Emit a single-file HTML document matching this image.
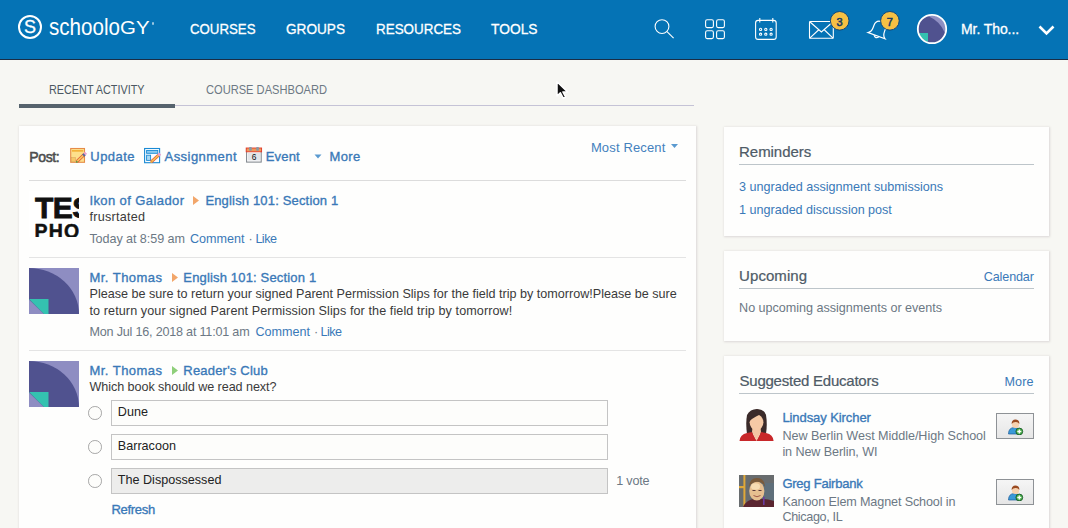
<!DOCTYPE html>
<html><head><meta charset="utf-8"><style>
html,body{margin:0;padding:0;width:1068px;height:528px;overflow:hidden;background:#f7f7f3;font-family:"Liberation Sans",sans-serif;}
.t{position:absolute;white-space:nowrap;}
.a{position:absolute;}
</style></head><body>
<div class="a" style="left:0;top:0;width:1068px;height:59px;background:#0573b5"></div>
<div class="a" style="left:0;top:58.5px;width:1068px;height:1.5px;background:#1a2d45"></div>
<svg class="a" style="left:0;top:0" width="60" height="58"><circle cx="30" cy="27" r="11" fill="none" stroke="#fff" stroke-width="2"/></svg>
<div class="t" style="left:23.90px;top:14.06px;font-size:18px;line-height:27px;color:#fff;-webkit-text-stroke:0.3px #fff;">S</div>
<div class="t" style="left:48.60px;top:7.61px;font-size:24.5px;line-height:37px;color:#fff;transform:scaleX(0.8408);transform-origin:0 0;">schoolo</div>
<div class="t" style="left:120.30px;top:14.86px;font-size:18px;line-height:27px;color:#fff;transform:scaleX(1.1343);transform-origin:0 0;">GY</div>
<div class="a" style="left:151.5px;top:22px;width:2.5px;height:2.5px;border-radius:50%;background:rgba(255,255,255,.6)"></div>
<div class="t" style="left:189.50px;top:18.85px;font-size:14px;line-height:21px;color:#fff;transform:scaleX(0.9460);transform-origin:0 0;-webkit-text-stroke:0.28px #fff;">COURSES</div>
<div class="t" style="left:286.00px;top:18.85px;font-size:14px;line-height:21px;color:#fff;transform:scaleX(0.9724);transform-origin:0 0;-webkit-text-stroke:0.28px #fff;">GROUPS</div>
<div class="t" style="left:375.50px;top:18.85px;font-size:14px;line-height:21px;color:#fff;transform:scaleX(0.9584);transform-origin:0 0;-webkit-text-stroke:0.28px #fff;">RESOURCES</div>
<div class="t" style="left:490.50px;top:18.85px;font-size:14px;line-height:21px;color:#fff;transform:scaleX(0.9852);transform-origin:0 0;-webkit-text-stroke:0.28px #fff;">TOOLS</div>
<svg class="a" style="left:640px;top:0" width="420" height="58"><g fill="none" stroke="#fff" stroke-width="1.1"><circle cx="22" cy="26.6" r="6.9"/><line x1="27" y1="31.6" x2="33.6" y2="38.2"/><rect x="65.6" y="19.8" width="7.8" height="7.8" rx="1.6"/><rect x="76.6" y="19.8" width="7.8" height="7.8" rx="1.6"/><rect x="65.6" y="30.8" width="7.8" height="7.8" rx="1.6"/><rect x="76.6" y="30.8" width="7.8" height="7.8" rx="1.6"/><rect x="115.6" y="20.4" width="20.6" height="19" rx="2.5"/><line x1="119.8" y1="18" x2="119.8" y2="22.5"/><line x1="132.8" y1="18" x2="132.8" y2="22.5"/><circle cx="120.6" cy="29.4" r="1.1"/><circle cx="125.8" cy="29.4" r="1.1"/><circle cx="131.1" cy="29.4" r="1.1"/><circle cx="120.6" cy="34.2" r="1.1"/><circle cx="125.8" cy="34.2" r="1.1"/><circle cx="131.1" cy="34.2" r="1.1"/><rect x="169.5" y="21.5" width="23.8" height="16.8" rx="1"/><path d="M169.5 21.5 L181.4 32 L193.3 21.5 M169.5 38.3 L178.5 30 M193.3 38.3 L184.5 30"/></g><g transform="translate(238.8 29.6) rotate(20)" fill="none" stroke="#fff" stroke-width="1.2"><path d="M-9 6.5 Q-6 4.5 -6 0 L-6 -2.5 Q-6 -8.5 0 -8.5 Q6 -8.5 6 -2.5 L6 0 Q6 4.5 9 6.5 Z"/><path d="M-2.5 7 Q0 10 2.5 7"/></g><circle cx="199.7" cy="20.8" r="9.3" fill="#f6c044" stroke="#12477a" stroke-width="1"/><circle cx="249.9" cy="20.8" r="9.3" fill="#f6c044" stroke="#12477a" stroke-width="1"/></svg>
<div class="t" style="left:836.60px;top:14.09px;font-size:11px;line-height:16px;color:#183a64;-webkit-text-stroke:0.55px #183a64;">3</div>
<div class="t" style="left:886.80px;top:14.09px;font-size:11px;line-height:16px;color:#183a64;-webkit-text-stroke:0.55px #183a64;">7</div>
<svg class="a" style="left:915px;top:12.3px" width="34" height="34"><defs><clipPath id="cp"><circle cx="17" cy="17" r="13.6"/></clipPath></defs><g clip-path="url(#cp)"><rect x="0" y="0" width="34" height="34" fill="#8f8fc2"/><path d="M2 2 A30 30 0 0 1 32 32 L2 32 Z" fill="#50528f"/><path d="M2 21 L13 21 L13 32 L9.5 32 Z" fill="#34c2b0"/><path d="M2 21.5 L2 32 L9.5 32 Z" fill="#8f8fc2"/></g><circle cx="17" cy="17" r="14.2" fill="none" stroke="#fff" stroke-width="1.8"/></svg>
<div class="t" style="left:961.00px;top:19.25px;font-size:14px;line-height:21px;color:#fff;-webkit-text-stroke:0.3px #fff;letter-spacing:-0.087px;">Mr. Tho...</div>
<svg class="a" style="left:1036px;top:22px" width="22" height="16"><path d="M3.5 4.5 L10.5 11.5 L17.5 4.5" fill="none" stroke="#fff" stroke-width="2.6"/></svg>
<div class="t" style="left:49.00px;top:80.00px;font-size:13px;line-height:20px;color:#4b5862;transform:scaleX(0.8332);transform-origin:0 0;">RECENT ACTIVITY</div>
<div class="t" style="left:205.50px;top:80.00px;font-size:13px;line-height:20px;color:#6d7984;transform:scaleX(0.8546);transform-origin:0 0;">COURSE DASHBOARD</div>
<div class="a" style="left:175px;top:105px;width:519px;height:1px;background:#c5c3d6"></div>
<div class="a" style="left:19px;top:104px;width:156px;height:4px;background:#56636d"></div>
<div class="a" style="left:19px;top:125.5px;width:677px;height:420px;background:#fefefd;box-shadow:0 0 2px 0.5px rgba(90,60,80,.16)"></div>
<div class="t" style="left:29.30px;top:146.65px;font-size:14px;line-height:21px;color:#4d4d4d;-webkit-text-stroke:0.55px #4d4d4d;letter-spacing:-0.380px;">Post:</div>
<svg class="a" style="left:66px;top:144px" width="24" height="22"><rect x="4.7" y="4.5" width="13.8" height="13.8" fill="#fde08c" stroke="#e68c48" stroke-width="1.1"/><rect x="6" y="6" width="11.2" height="1.7" fill="#f3b23a"/><rect x="5.3" y="13.6" width="4.2" height="4.2" fill="#f6c868" stroke="#d8a058" stroke-width="0.5"/><path d="M10.8 17.6 L18.4 10.4" stroke="#e04a38" stroke-width="3"/><path d="M10.8 17.6 L18.4 10.4" stroke="#f6c85a" stroke-width="1.8"/><path d="M17.2 11.6 L18.6 10.2" stroke="#5068a0" stroke-width="3"/><path d="M18.6 10.2 L20 8.8" stroke="#e8a0d0" stroke-width="3"/><circle cx="10.8" cy="17.8" r="0.9" fill="#4a9a40"/></svg>
<div class="t" style="left:90.30px;top:147.20px;font-size:13px;line-height:20px;color:#3a79b8;-webkit-text-stroke:0.35px #3a79b8;letter-spacing:0.447px;">Update</div>
<svg class="a" style="left:141px;top:144px" width="24" height="22"><rect x="3.6" y="4.5" width="15" height="14.2" fill="#fbfdff" stroke="#1a8ad4" stroke-width="1.1"/><rect x="5.6" y="6.5" width="11.2" height="2.8" fill="#8ccaf0" stroke="#1a8ad4" stroke-width="0.9"/><rect x="5.6" y="11.2" width="4" height="5.2" fill="#a8d8f4" stroke="#1a8ad4" stroke-width="0.9"/><path d="M10.2 17.8 L18.2 10.6" stroke="#e0503a" stroke-width="3"/><path d="M10.2 17.8 L18.2 10.6" stroke="#f8c050" stroke-width="1.8"/><path d="M17.4 11.3 L19.2 9.7" stroke="#e8a0d0" stroke-width="3"/><circle cx="10.2" cy="18" r="1" fill="#e8a040"/></svg>
<div class="t" style="left:164.50px;top:147.20px;font-size:13px;line-height:20px;color:#3a79b8;-webkit-text-stroke:0.35px #3a79b8;letter-spacing:0.458px;">Assignment</div>
<svg class="a" style="left:242px;top:143px" width="24" height="22"><rect x="4.6" y="5.5" width="14.6" height="13.6" fill="#fdfdfd" stroke="#7a8088" stroke-width="1"/><rect x="6" y="10" width="12" height="7.5" fill="#e3e5e9"/><rect x="4.2" y="5" width="15.4" height="3.8" fill="#ee9a5a" stroke="#e23a2a" stroke-width="0.9"/><rect x="7.1" y="4" width="2.7" height="3.8" rx="0.8" fill="#8a98a4"/><rect x="14.2" y="4" width="2.7" height="3.8" rx="0.8" fill="#8a98a4"/><text x="12" y="16.9" font-size="8.4" text-anchor="middle" font-family="Liberation Sans" fill="#111">6</text></svg>
<div class="t" style="left:265.80px;top:147.20px;font-size:13px;line-height:20px;color:#3a79b8;-webkit-text-stroke:0.35px #3a79b8;letter-spacing:0.152px;">Event</div>
<svg class="a" style="left:313px;top:153px" width="10" height="7"><path d="M1.5 1.5 L8.5 1.5 L5 5.5 Z" fill="#5a9ad0"/></svg>
<div class="t" style="left:329.40px;top:147.20px;font-size:13px;line-height:20px;color:#3a79b8;-webkit-text-stroke:0.35px #3a79b8;letter-spacing:0.446px;">More</div>
<div class="t" style="left:590.90px;top:137.70px;font-size:13px;line-height:20px;color:#4481bd;letter-spacing:0.148px;">Most Recent</div>
<svg class="a" style="left:669px;top:143px" width="12" height="7"><path d="M2 1 L9 1 L5.5 5 Z" fill="#5a9ad0"/></svg>
<div class="a" style="left:29px;top:180px;width:657px;height:1px;background:#dcdcdc"></div>
<div class="a" style="left:29px;top:191px;width:50px;height:46px;background:#fff;overflow:hidden"><div class="t" style="left:6px;top:1px;font-size:30px;line-height:32px;font-weight:bold;color:#111;letter-spacing:-0.6px;-webkit-text-stroke:0.8px #111">TES</div><div class="t" style="left:5.5px;top:30px;font-size:19.5px;line-height:20px;font-weight:bold;color:#111;letter-spacing:1.2px;-webkit-text-stroke:0.5px #111">PHO</div></div>
<div class="t" style="left:89.40px;top:190.50px;font-size:13px;line-height:20px;color:#3a79b8;-webkit-text-stroke:0.35px #3a79b8;letter-spacing:0.408px;">Ikon of Galador</div>
<svg class="a" style="left:191px;top:195px" width="10" height="11"><path d="M2 1 L8 5.5 L2 10 Z" fill="#f2a66a"/></svg>
<div class="t" style="left:205.40px;top:190.50px;font-size:13px;line-height:20px;color:#3a79b8;-webkit-text-stroke:0.35px #3a79b8;letter-spacing:0.166px;">English 101: Section 1</div>
<div class="t" style="left:89.40px;top:207.73px;font-size:12.6px;line-height:19px;color:#3a3a3a;letter-spacing:0.278px;">frusrtated</div>
<div class="t" style="left:89.40px;top:229.73px;font-size:12.6px;line-height:19px;color:#6c7884;letter-spacing:-0.072px;">Today at 8:59 am</div>
<div class="t" style="left:190.00px;top:229.73px;font-size:12.6px;line-height:19px;color:#3a79b8;">Comment</div>
<div class="t" style="left:248.50px;top:229.73px;font-size:12.6px;line-height:19px;color:#6c7884;">·</div>
<div class="t" style="left:255.40px;top:229.73px;font-size:12.6px;line-height:19px;color:#3a79b8;letter-spacing:-0.528px;">Like</div>
<div class="a" style="left:29px;top:257px;width:657px;height:1px;background:#e4e4e4"></div>
<svg class="a" style="left:29px;top:268px" width="50" height="46"><rect width="50" height="46" fill="#8e8dc2"/><path d="M0 0 A50 46 0 0 1 50 46 L0 46 Z" fill="#50528f"/><path d="M0 31 L19.5 31 L19.5 46 L14.8 46 Z" fill="#34c2b0"/><path d="M0 31.5 L0 46 L14.8 46 Z" fill="#8e8dc2"/></svg>
<div class="t" style="left:89.50px;top:267.50px;font-size:13px;line-height:20px;color:#3a79b8;-webkit-text-stroke:0.35px #3a79b8;letter-spacing:0.462px;">Mr. Thomas</div>
<svg class="a" style="left:170px;top:272px" width="10" height="11"><path d="M2 1 L8 5.5 L2 10 Z" fill="#f2a66a"/></svg>
<div class="t" style="left:183.30px;top:267.50px;font-size:13px;line-height:20px;color:#3a79b8;-webkit-text-stroke:0.35px #3a79b8;letter-spacing:0.166px;">English 101: Section 1</div>
<div class="t" style="left:89.50px;top:285.13px;font-size:12.6px;line-height:19px;color:#3a3a3a;">Please be sure to return your signed Parent Permission Slips for the field trip by tomorrow!Please be sure</div>
<div class="t" style="left:89.50px;top:301.83px;font-size:12.6px;line-height:19px;color:#3a3a3a;letter-spacing:0.092px;">to return your signed Parent Permission Slips for the field trip by tomorrow!</div>
<div class="t" style="left:89.50px;top:323.33px;font-size:12.6px;line-height:19px;color:#6c7884;letter-spacing:-0.206px;">Mon Jul 16, 2018 at 11:01 am</div>
<div class="t" style="left:255.50px;top:323.33px;font-size:12.6px;line-height:19px;color:#3a79b8;">Comment</div>
<div class="t" style="left:314.00px;top:323.33px;font-size:12.6px;line-height:19px;color:#6c7884;">·</div>
<div class="t" style="left:320.50px;top:323.33px;font-size:12.6px;line-height:19px;color:#3a79b8;letter-spacing:-0.528px;">Like</div>
<div class="a" style="left:29px;top:350px;width:657px;height:1px;background:#e4e4e4"></div>
<svg class="a" style="left:29px;top:361px" width="50" height="46"><rect width="50" height="46" fill="#8e8dc2"/><path d="M0 0 A50 46 0 0 1 50 46 L0 46 Z" fill="#50528f"/><path d="M0 31 L19.5 31 L19.5 46 L14.8 46 Z" fill="#34c2b0"/><path d="M0 31.5 L0 46 L14.8 46 Z" fill="#8e8dc2"/></svg>
<div class="t" style="left:89.50px;top:360.80px;font-size:13px;line-height:20px;color:#3a79b8;-webkit-text-stroke:0.35px #3a79b8;letter-spacing:0.462px;">Mr. Thomas</div>
<svg class="a" style="left:170px;top:365px" width="10" height="11"><path d="M2 1 L8 5.5 L2 10 Z" fill="#8fcf7a"/></svg>
<div class="t" style="left:183.30px;top:360.80px;font-size:13px;line-height:20px;color:#3a79b8;-webkit-text-stroke:0.35px #3a79b8;letter-spacing:0.203px;">Reader's Club</div>
<div class="t" style="left:89.50px;top:378.23px;font-size:12.6px;line-height:19px;color:#3a3a3a;letter-spacing:-0.068px;">Which book should we read next?</div>
<div class="a" style="left:88.4px;top:406.3px;width:11.6px;height:11.6px;border:1px solid #a6a6a6;border-radius:50%;background:#fdfdfb"></div>
<div class="a" style="left:111px;top:400px;width:495px;height:23.6px;border:1px solid #c4c4c4;background:#fdfdfb"></div>
<div class="t" style="left:117.80px;top:402.83px;font-size:12.6px;line-height:19px;color:#222;">Dune</div>
<div class="a" style="left:88.4px;top:440.3px;width:11.6px;height:11.6px;border:1px solid #a6a6a6;border-radius:50%;background:#fdfdfb"></div>
<div class="a" style="left:111px;top:434px;width:495px;height:23.6px;border:1px solid #c4c4c4;background:#fdfdfb"></div>
<div class="t" style="left:117.80px;top:436.83px;font-size:12.6px;line-height:19px;color:#222;">Barracoon</div>
<div class="a" style="left:88.4px;top:474.3px;width:11.6px;height:11.6px;border:1px solid #a6a6a6;border-radius:50%;background:#fdfdfb"></div>
<div class="a" style="left:111px;top:468px;width:495px;height:23.6px;border:1px solid #c4c4c4;background:#ededec"></div>
<div class="t" style="left:117.80px;top:470.83px;font-size:12.6px;line-height:19px;color:#222;">The Dispossessed</div>
<div class="t" style="left:616.30px;top:471.53px;font-size:12.6px;line-height:19px;color:#6c7884;letter-spacing:-0.220px;">1 vote</div>
<div class="t" style="left:111.40px;top:499.70px;font-size:13px;line-height:20px;color:#3a79b8;-webkit-text-stroke:0.35px #3a79b8;letter-spacing:-0.288px;">Refresh</div>
<div class="a" style="left:724px;top:127px;width:325px;height:109px;background:#fefefd;box-shadow:0 0 2px 0.5px rgba(90,60,80,.16)"></div>
<div class="a" style="left:724px;top:251px;width:325px;height:90px;background:#fefefd;box-shadow:0 0 2px 0.5px rgba(90,60,80,.16)"></div>
<div class="a" style="left:724px;top:356px;width:325px;height:200px;background:#fefefd;box-shadow:0 0 2px 0.5px rgba(90,60,80,.16)"></div>
<div class="t" style="left:739.10px;top:141.00px;font-size:15px;line-height:22px;color:#4e5b67;-webkit-text-stroke:0.22px #4e5b67;letter-spacing:-0.058px;">Reminders</div>
<div class="a" style="left:739px;top:164px;width:295px;height:1px;background:#bdc5ca"></div>
<div class="t" style="left:739.10px;top:178.13px;font-size:12.6px;line-height:19px;color:#3a79b8;letter-spacing:-0.015px;">3 ungraded assignment submissions</div>
<div class="t" style="left:739.10px;top:201.03px;font-size:12.6px;line-height:19px;color:#3a79b8;letter-spacing:-0.023px;">1 ungraded discussion post</div>
<div class="t" style="left:739.10px;top:264.70px;font-size:15px;line-height:22px;color:#4e5b67;-webkit-text-stroke:0.22px #4e5b67;letter-spacing:0.059px;">Upcoming</div>
<div class="t" style="left:983.80px;top:267.73px;font-size:12.6px;line-height:19px;color:#3a79b8;letter-spacing:-0.141px;">Calendar</div>
<div class="a" style="left:739px;top:288px;width:295px;height:1px;background:#bdc5ca"></div>
<div class="t" style="left:739.10px;top:298.73px;font-size:12.6px;line-height:19px;color:#6c7884;letter-spacing:-0.024px;">No upcoming assignments or events</div>
<div class="t" style="left:739.50px;top:369.80px;font-size:15px;line-height:22px;color:#4e5b67;-webkit-text-stroke:0.22px #4e5b67;letter-spacing:-0.233px;">Suggested Educators</div>
<div class="t" style="left:1004.40px;top:372.73px;font-size:12.6px;line-height:19px;color:#3a79b8;letter-spacing:0.124px;">More</div>
<div class="a" style="left:739px;top:393px;width:295px;height:1px;background:#bdc5ca"></div>
<div class="t" style="left:782.40px;top:407.50px;font-size:13px;line-height:20px;color:#3a79b8;-webkit-text-stroke:0.35px #3a79b8;letter-spacing:-0.079px;">Lindsay Kircher</div>
<div class="t" style="left:782.40px;top:427.13px;font-size:12.6px;line-height:19px;color:#6c7884;letter-spacing:-0.042px;">New Berlin West Middle/High School</div>
<div class="t" style="left:782.40px;top:442.63px;font-size:12.6px;line-height:19px;color:#6c7884;letter-spacing:-0.095px;">in New Berlin, WI</div>
<div class="t" style="left:782.40px;top:474.10px;font-size:13px;line-height:20px;color:#3a79b8;-webkit-text-stroke:0.35px #3a79b8;letter-spacing:-0.237px;">Greg Fairbank</div>
<div class="t" style="left:782.40px;top:492.73px;font-size:12.6px;line-height:19px;color:#6c7884;letter-spacing:-0.125px;">Kanoon Elem Magnet School in</div>
<div class="t" style="left:782.40px;top:508.23px;font-size:12.6px;line-height:19px;color:#6c7884;letter-spacing:-0.339px;">Chicago, IL</div>
<svg class="a" style="left:735px;top:404px" width="44" height="40"><path d="M12 30 Q10.5 19 12 11 Q15 4.9 22 4.9 Q29 4.9 31 11 Q32.5 20 31 30 Z" fill="#3b2b2a"/><path d="M4.5 37 Q5 30.5 12 29 L17 28 L21.5 36.7 L26 28 L31 29 Q38.2 30.5 38.6 37 Z" fill="#c8282a"/><path d="M17.5 23 L25.5 23 L26 28 L21.5 36.7 L17 28 Z" fill="#f4c6a2"/><ellipse cx="21.5" cy="18.3" rx="6.9" ry="7.9" fill="#f6caa6"/><path d="M12.3 19 Q11.5 6 22 5.5 Q30.5 6 30.8 13 Q28 10.5 25 10.5 Q16.5 14 12.3 20 Z" fill="#3b2b2a"/></svg>
<svg class="a" style="left:739px;top:475px" width="35" height="32"><rect width="35" height="32" fill="#686c6e"/><rect x="22" y="8" width="13" height="18" fill="#5f6f7a"/><rect x="4.4" y="0" width="2" height="32" fill="#e0a838"/><rect x="0" y="11" width="6" height="2.2" fill="#e0a838"/><path d="M4 32 Q8 24 16 24 Q26 23 35 26 L35 32 Z" fill="#5a2530"/><rect x="24" y="22" width="1.6" height="8" fill="#6a3aa0"/><ellipse cx="17.8" cy="16" rx="7.6" ry="9.6" fill="#e6bf90"/><ellipse cx="16.5" cy="11.5" rx="4.5" ry="3.2" fill="#f6dcb4"/><path d="M10 12 Q10.5 3 18 3 Q25.5 3 26 12 Q23.5 6.5 18 6.8 Q12.5 7 10 12 Z" fill="#7a5a3a"/><path d="M13.5 15.5 L16.5 15.5 M19.5 15.5 L22.5 15.5" stroke="#5a3a3a" stroke-width="1.2"/><path d="M14.5 20.5 Q18 23 21.5 20.5" stroke="#a05a4a" stroke-width="1" fill="none"/></svg>
<div class="a" style="left:996px;top:413px;width:36px;height:24px;border:1px solid #8e9296;background:linear-gradient(#f5f5f5,#e6e6e6)"><svg style="position:absolute;left:9px;top:3px" width="18" height="18"><path d="M2.5 17 Q2.5 10.5 8.5 10.5 Q14 10.5 14.5 17 Z" fill="#3a9ad8" stroke="#1d5a9a" stroke-width="0.7"/><circle cx="9.5" cy="7.5" r="3.6" fill="#f6d2b0"/><path d="M5.6 7 Q5.6 2.5 9.5 2.5 Q13.4 2.5 13.4 7 Q12 4.8 9.5 5 Q7 5 5.6 7 Z" fill="#9a4a20"/><circle cx="13.3" cy="14.5" r="3.4" fill="#4ab04a" stroke="#1a5a2a" stroke-width="0.9"/><path d="M11.3 14.5 L15.3 14.5 M13.3 12.5 L13.3 16.5" stroke="#fff" stroke-width="1.3"/></svg></div>
<div class="a" style="left:996px;top:479px;width:36px;height:24px;border:1px solid #8e9296;background:linear-gradient(#f5f5f5,#e6e6e6)"><svg style="position:absolute;left:9px;top:3px" width="18" height="18"><path d="M2.5 17 Q2.5 10.5 8.5 10.5 Q14 10.5 14.5 17 Z" fill="#3a9ad8" stroke="#1d5a9a" stroke-width="0.7"/><circle cx="9.5" cy="7.5" r="3.6" fill="#f6d2b0"/><path d="M5.6 7 Q5.6 2.5 9.5 2.5 Q13.4 2.5 13.4 7 Q12 4.8 9.5 5 Q7 5 5.6 7 Z" fill="#9a4a20"/><circle cx="13.3" cy="14.5" r="3.4" fill="#4ab04a" stroke="#1a5a2a" stroke-width="0.9"/><path d="M11.3 14.5 L15.3 14.5 M13.3 12.5 L13.3 16.5" stroke="#fff" stroke-width="1.3"/></svg></div>
<svg class="a" style="left:550px;top:75px" width="30" height="30"><path d="M7 6.8 L7 21 L10.4 17.8 L13.3 23.3 L15.7 22.2 L12.9 16.9 L17.6 16.9 Z" fill="#111" stroke="#fff" stroke-width="1.5" stroke-linejoin="round"/></svg>
</body></html>
